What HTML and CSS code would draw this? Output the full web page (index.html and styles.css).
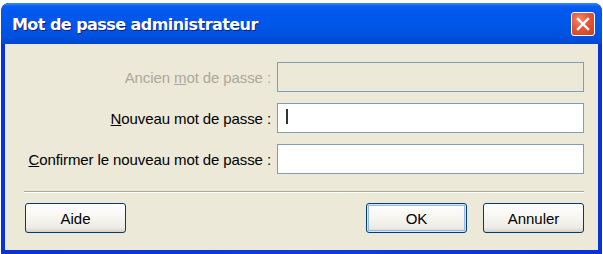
FILE: index.html
```html
<!DOCTYPE html>
<html lang="fr">
<head>
    <meta charset="UTF-8">
    <title>Mot de passe administrateur</title>
    <link rel="stylesheet" href="styles.css">
</head>
<body>

    <div class="window">
        <div class="titlebar">
            <span class="title">Mot de passe administrateur</span>
            <button class="close-button" title="Fermer">
                <svg width="14" height="14" viewBox="0 0 14 14">
                    <path d="M2 2 L12 12 M12 2 L2 12" stroke="white" stroke-width="2.4" stroke-linecap="square"/>
                </svg>
            </button>
        </div>

        <div class="dialog">
            <div class="form">
                <label class="disabled" for="oldPassword">Ancien <u>m</u>ot de passe :</label>
                <input type="password" id="oldPassword" class="field" disabled>

                <label for="newPassword"><u>N</u>ouveau mot de passe :</label>
                <div class="field focused"><span class="caret"></span></div>

                <label for="confirmPassword"><u>C</u>onfirmer le nouveau mot de passe :</label>
                <input type="password" id="confirmPassword" class="field">
            </div>

            <div class="separator"></div>

            <div class="button-row">
                <button class="xp-button">Aide</button>
                <div class="right-buttons">
                    <button class="xp-button default">OK</button>
                    <button class="xp-button">Annuler</button>
                </div>
            </div>
        </div>
    </div>

</body>
</html>
```

FILE: styles.css
```css
body {
    margin: 0;
    background-color: white;
    font-family: "Liberation Sans", Arial, sans-serif;
    font-size: 15px;
    overflow: hidden;
}

.window {
    margin: 3px 1px 0 1px;
    height: 251px;
    display: flex;
    flex-direction: column;
    border-radius: 8px 8px 0 0;
    background: linear-gradient(to right, #0831d9 0%, #0a3ee0 50%, #0831d9 100%);
    overflow: hidden;
}

.titlebar {
    height: 41px;
    display: flex;
    align-items: center;
    justify-content: space-between;
    padding: 0 7px 0 11px;
    border-radius: 8px 8px 0 0;
    background: linear-gradient(to bottom, #3a8cff 0%, #0a5df2 8%, #0058ee 20%, #0056e8 55%, #0052df 80%, #0046d0 100%);
}

.title {
    color: white;
    font-family: "DejaVu Sans", sans-serif;
    font-weight: bold;
    font-size: 16px;
    letter-spacing: -0.55px;
    text-shadow: 1px 1px 0 #0a1e8c;
    margin-top: 2px;
}

.close-button {
    width: 24px;
    height: 24px;
    padding: 0;
    display: flex;
    align-items: center;
    justify-content: center;
    border: 1px solid white;
    border-radius: 3px;
    background: radial-gradient(circle at 35% 30%, #f08a6a 0%, #e2573a 45%, #c8401f 100%);
    margin-top: 1px;
}

.dialog {
    flex: 1;
    margin: 0 4px 4px 4px;
    background-color: #ece9d8;
    padding: 18px 14px 0 20px;
}

.form {
    display: grid;
    grid-template-columns: 1fr 307px;
    column-gap: 6px;
    row-gap: 11px;
    align-items: center;
}

.form label {
    text-align: right;
    color: black;
    letter-spacing: -0.1px;
}

.form label.disabled {
    color: #aca899;
}

.field {
    box-sizing: border-box;
    height: 30px;
    width: 100%;
    margin: 0;
    border: 1px solid #7f9db9;
    background-color: white;
    position: relative;
}

.field:disabled {
    background-color: #ece9d8;
}

.caret {
    position: absolute;
    left: 8px;
    top: 5px;
    width: 2px;
    height: 15px;
    background-color: #333;
}

.separator {
    margin: 17px 0 0 -1px;
    border-top: 1px solid #aca899;
    border-bottom: 1px solid white;
}

.button-row {
    display: flex;
    justify-content: space-between;
    margin-top: 10px;
}

.right-buttons {
    display: flex;
    gap: 16px;
}

.xp-button {
    width: 101px;
    height: 30px;
    padding: 0;
    font-family: "Liberation Sans", Arial, sans-serif;
    font-size: 15px;
    color: black;
    border: 1px solid #003c74;
    border-radius: 3px;
    background: linear-gradient(to bottom, #ffffff 0%, #f6f5f0 50%, #ecebe6 85%, #d6d0c5 100%);
}

.xp-button.default {
    box-shadow: inset 0 0 0 1px #cee7ff, inset 0 0 0 2px #98b8ea;
}
```
